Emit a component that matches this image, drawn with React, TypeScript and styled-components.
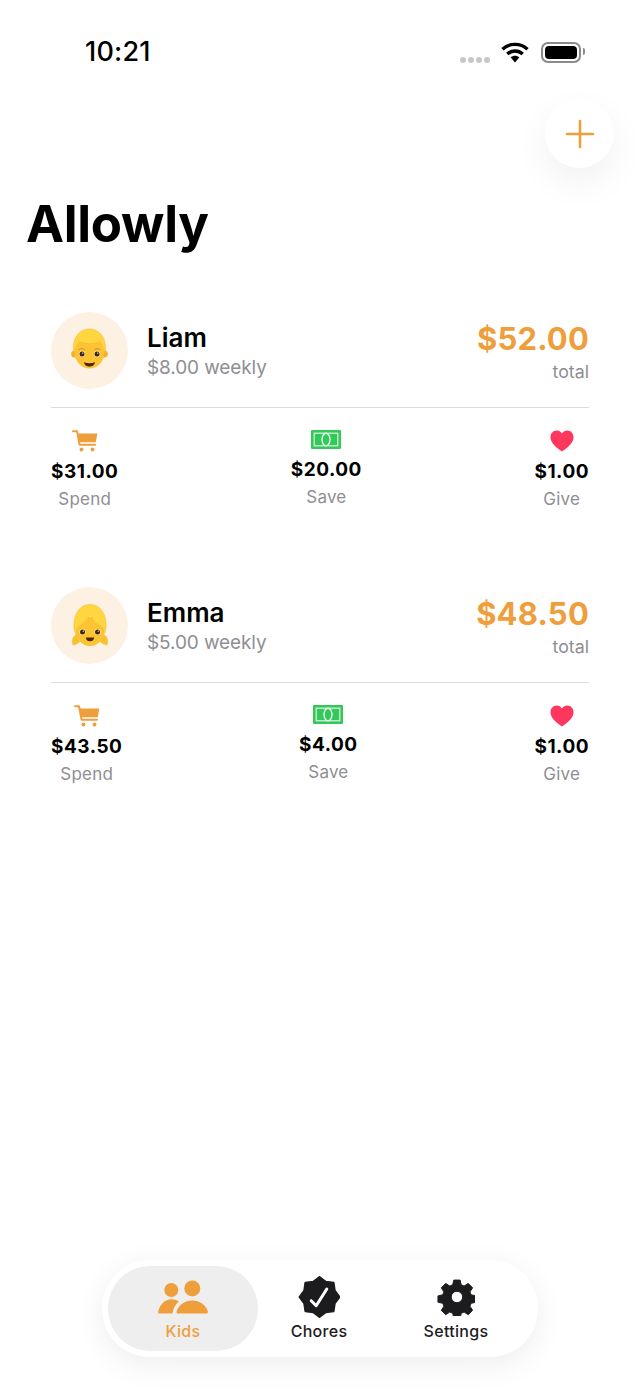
import React from "react";
import styled, { createGlobalStyle } from "styled-components";

const ORANGE = "#ef9e3c";

const GlobalStyle = createGlobalStyle`
  html, body {
    margin: 0;
    padding: 0;
    background: #fff;
    font-family: Inter, "Noto Sans", sans-serif;
    color: #000;
  }
  * { box-sizing: border-box; }
`;

// alternating outer/inner radius star, rounded off by the stroke join
const starPath = (cx: number, cy: number, outer: number, inner: number, lobes: number) => {
  const pts: string[] = [];
  for (let i = 0; i < lobes * 2; i++) {
    const a = (Math.PI * i) / lobes - Math.PI / 2;
    const r = i % 2 === 0 ? outer : inner;
    pts.push(`${(cx + r * Math.cos(a)).toFixed(2)} ${(cy + r * Math.sin(a)).toFixed(2)}`);
  }
  return `M${pts.join("L")}Z`;
};

const CartIcon = () => (
  <svg width="26" height="22" viewBox="0 0 26 22">
    <path d="M1 1.2h4l2.6 13.6H23" fill="none" stroke={ORANGE} strokeWidth="2" strokeLinecap="round" strokeLinejoin="round" />
    <path d="M6 3.5h19.4l-1.6 8.8H7.6z" fill={ORANGE} />
    <circle cx="9.5" cy="19.6" r="2" fill={ORANGE} />
    <circle cx="20.5" cy="19.6" r="2" fill={ORANGE} />
  </svg>
);

const BillIcon = () => (
  <svg width="30" height="19" viewBox="0 0 30 19">
    <rect x="0" y="0" width="30" height="19" rx="1" fill="#34c759" />
    <rect x="3.2" y="3.2" width="23.6" height="12.6" fill="#34c759" stroke="#d9f6e0" strokeWidth="1.2" />
    <ellipse cx="15" cy="9.5" rx="4" ry="6.3" fill="#34c759" stroke="#e9faee" strokeWidth="1.4" />
  </svg>
);

const HeartIcon = () => (
  <svg width="24" height="22" viewBox="0 0 24 22">
    <path d="M12 21.5C5 16.6.5 12.6.5 7.2.5 3.4 3.3.6 6.8.6c2.2 0 4 1.1 5.2 3 1.2-1.9 3-3 5.2-3 3.5 0 6.3 2.8 6.3 6.6 0 5.4-4.5 9.4-11.5 14.3z" fill="#ff375f" />
  </svg>
);

const PeopleIcon = () => (
  <svg width="50" height="34" viewBox="0 0 50 34">
    <circle cx="13.3" cy="10" r="7" fill={ORANGE} />
    <circle cx="34.3" cy="8.4" r="8" fill={ORANGE} />
    <path d="M1 33.5c-1 0-1-1-.7-2.2C1.8 24.5 7 19.2 13.5 19.2c2.8 0 5.3.8 7.3 2.3-3.3 2.8-5.5 6.8-6.3 12z" fill={ORANGE} />
    <path d="M20 33.5c-1.3 0-1.7-1-1.3-2.2C20.7 25 27 20.5 34.3 20.5S48 25 49.8 31.3c.3 1.2 0 2.2-1.3 2.2z" fill={ORANGE} />
  </svg>
);

const ChoresIcon = () => (
  <svg width="42" height="42" viewBox="0 0 42 42">
    <path d={starPath(21.5, 21, 20, 16.5, 8)} fill="#1c1c1e" stroke="#1c1c1e" strokeWidth="2" strokeLinejoin="round" />
    <path d="M13.2 24.7l5 5L28.8 13" fill="none" stroke="#fff" strokeWidth="3" strokeLinecap="round" strokeLinejoin="round" />
  </svg>
);

const GearIcon = () => (
  <svg width="38" height="38" viewBox="-0.6 0 24 24">
    <path
      fillRule="evenodd"
      fill="#1c1c1e"
      stroke="#1c1c1e"
      strokeWidth="0.6"
      strokeLinejoin="round"
      d="M10 1.3h4l.7 3 1.8.8 2.6-1.7 2.8 2.8-1.7 2.6.8 1.8 3 .7v4l-3 .7-.8 1.8 1.7 2.6-2.8 2.8-2.6-1.7-1.8.8-.7 3h-4l-.7-3-1.8-.8-2.6 1.7-2.8-2.8 1.7-2.6-.8-1.8-3-.7v-4l3-.7.8-1.8-1.7-2.6 2.8-2.8 2.6 1.7 1.8-.8zM12 8.4a3.6 3.6 0 1 0 0 7.2 3.6 3.6 0 0 0 0-7.2z"
    />
  </svg>
);

const WifiIcon = () => (
  <svg width="28" height="21" viewBox="0 0 28 21">
    <path d="M1.5 7.2C8.5.7 19.5.7 26.5 7.2" fill="none" stroke="#000" strokeWidth="3.4" />
    <path d="M6.3 12C10.6 8 17.4 8 21.7 12" fill="none" stroke="#000" strokeWidth="3.4" />
    <path d="M9.6 15.3c2.5-2.2 6.3-2.2 8.8 0L14 20.5z" fill="#000" />
  </svg>
);

const Eye = ({ cx, cy }: { cx: number; cy: number }) => (
  <>
    <circle cx={cx} cy={cy} r="3" fill="#fff0c4" />
    <circle cx={cx} cy={cy} r="2.5" fill="#3f2810" />
    <circle cx={cx + 0.8} cy={cy - 0.9} r="0.7" fill="#fff" />
  </>
);

const BoyFace = () => (
  <svg width="40" height="46" viewBox="0 0 40 46">
    <circle cx="4.8" cy="26" r="3.6" fill="#f4ae2a" />
    <circle cx="34.2" cy="26" r="3.6" fill="#f4ae2a" />
    <ellipse cx="19.5" cy="24.5" rx="14.8" ry="16" fill="#fcc433" />
    <path d="M3.8 25C1.5 10 9.5 1 19.5 1s18 9 15.7 24c-.8-5-2.7-9-5.2-11.2-5.5 2.4-15 2.4-20.5 0C7 16 4.6 20 3.8 25z" fill="#ffd63f" stroke="#f3b82a" strokeWidth="0.5" strokeLinejoin="round" />
    <path d="M9 21.5c1.8-1.2 4-1.2 5.5 0M24.500 21.5c1.5-1.2 3.7-1.2 5.5 0" fill="none" stroke="#c98a1a" strokeWidth="0.9" strokeLinecap="round" />
    <Eye cx={12} cy={26} />
    <Eye cx={27} cy={26} />
    <path d="M14 34.2c3.3 1.3 7.7 1.3 11 0-.8 3.4-3 4.3-5.5 4.3s-4.7-.9-5.5-4.3z" fill="#4a2410" />
  </svg>
);

const GirlFace = () => (
  <svg width="40" height="46" viewBox="0 0 40 46">
    <path d="M6 32C2.500 34 1.500 38 3 42c1.800-.2 4.500-1 7-3.500z" fill="#f8c22e" stroke="#f3b82a" strokeWidth="0.5" />
    <path d="M34 32c3.500 2 4.500 6 3 10-1.800-.2-4.500-1-7-3.500z" fill="#f8c22e" stroke="#f3b82a" strokeWidth="0.5" />
    <ellipse cx="20" cy="28.500" rx="14" ry="14.500" fill="#fcc433" />
    <path d="M20 12C17 18 12 22 6.500 25c-.5 3-.2 6 .5 8C3 28 3.500 20 5 14 7.500 6 13 1.500 20 1.500S32.500 6 35 14c1.500 6 2 14-2 19 .7-2 1-5 .5-8C28 22 23 18 20 12z" fill="#ffd63f" stroke="#f3b82a" strokeWidth="0.5" strokeLinejoin="round" />
    <Eye cx={12.500} cy={29} />
    <Eye cx={27.500} cy={29} />
    <path d="M15.800 34.500h8.400c-.4 2.800-2 3.800-4.200 3.800s-3.800-1-4.200-3.800z" fill="#4a2410" />
  </svg>
);

const Phone = styled.div`
  width: 640px;
  height: 1391px;
  background: #fff;
  display: flex;
  flex-direction: column;
  overflow: hidden;
`;

const StatusBar = styled.div`
  height: 70px;
  padding: 34px 59px 0 85px;
  display: flex;
  justify-content: space-between;
  align-items: center;
`;

const Time = styled.span`
  font-size: 27px;
  font-weight: 500;
  line-height: 36px;
  letter-spacing: 0.2px;
`;

const StatusIcons = styled.div`
  display: flex;
  align-items: center;
`;

const SignalDots = styled.div`
  display: flex;
  gap: 2px;
  margin: 16px 11px 0 0;
`;

const Dot = styled.i`
  width: 6px;
  height: 6px;
  border-radius: 50%;
  background: #c8c8c8;
`;

const Battery = styled.div`
  width: 40px;
  height: 21px;
  margin-left: 12px;
  border: 2px solid #8a8a8a;
  border-radius: 7px;
  padding: 2px;
  position: relative;
  &::before {
    content: "";
    display: block;
    height: 100%;
    background: #000;
    border-radius: 4px;
  }
  &::after {
    content: "";
    position: absolute;
    right: -6px;
    top: 4px;
    width: 2px;
    height: 7px;
    background: #8a8a8a;
    border-radius: 0 2px 2px 0;
  }
`;

const ActionRow = styled.div`
  display: flex;
  justify-content: flex-end;
  padding: 29px 26px 0 0;
`;

const AddButton = styled.button`
  width: 69px;
  height: 69px;
  border: 0;
  border-radius: 50%;
  background: #fff;
  padding: 0;
  display: flex;
  align-items: center;
  justify-content: center;
  box-shadow: 0 14px 36px rgba(0, 0, 0, 0.06);
`;

const Title = styled.h1`
  margin: 24px 0 0;
  padding-left: 26px;
  font-size: 51px;
  line-height: 63px;
  font-weight: 700;
  letter-spacing: -0.3px;
`;

const Cards = styled.div`
  display: flex;
  flex-direction: column;
  gap: 77px;
  margin-top: 57px;
  padding: 0 51px;
`;

const Card = styled.section``;

const CardHead = styled.div`
  display: flex;
  align-items: center;
  height: 77px;
`;

const Avatar = styled.div`
  width: 77px;
  height: 77px;
  border-radius: 50%;
  background: #fdf1e3;
  display: flex;
  align-items: center;
  justify-content: center;
  flex-shrink: 0;
`;

const NameBlock = styled.div`
  margin-left: 19px;
  padding-top: 1px;
  flex: 1;
`;

const Name = styled.div`
  font-size: 26px;
  font-weight: 600;
  line-height: 32px;
`;

const Weekly = styled.div`
  margin-top: 2px;
  font-size: 19px;
  line-height: 24px;
  letter-spacing: -0.1px;
  color: #8e8e93;
`;

const TotalBlock = styled.div`
  padding-top: 2px;
  text-align: right;
`;

const TotalValue = styled.div`
  font-size: 31px;
  font-weight: 700;
  line-height: 38px;
  letter-spacing: 0.2px;
  color: ${ORANGE};
`;

const TotalLabel = styled.div`
  margin-top: 3px;
  font-size: 17.8px;
  line-height: 22px;
  color: #8e8e93;
`;

const Divider = styled.div`
  height: 1px;
  margin-top: 18px;
  background: #dcdcdc;
`;

const Stats = styled.div`
  display: flex;
  justify-content: space-between;
  margin-top: 21px;
`;

const Stat = styled.div`
  display: flex;
  flex-direction: column;
  align-items: center;
`;

const StatIcon = styled.div<{ $height: number }>`
  height: ${(p) => p.$height}px;
  display: flex;
  align-items: flex-start;
  justify-content: center;
  padding-top: 1px;
`;

const StatValue = styled.div`
  margin-top: 7px;
  font-size: 19px;
  font-weight: 700;
  line-height: 24px;
  letter-spacing: 0.5px;
`;

const StatLabel = styled.div`
  margin-top: 4px;
  font-size: 17px;
  line-height: 22px;
  letter-spacing: 0.2px;
  color: #8e8e93;
`;

const TabBar = styled.nav`
  margin: auto 0 34px 102px;
  width: 436px;
  height: 97px;
  border-radius: 48px;
  background: #fff;
  padding: 6px;
  display: flex;
  box-shadow: 0 8px 32px rgba(0, 0, 0, 0.07);
`;

const Tab = styled.div<{ $width: number; $active?: boolean }>`
  width: ${(p) => p.$width}px;
  height: 85px;
  border-radius: 42px;
  display: flex;
  flex-direction: column;
  align-items: center;
  justify-content: flex-end;
  padding-bottom: 10px;
  background: ${(p) => (p.$active ? "#eeeeee" : "transparent")};
  color: ${(p) => (p.$active ? ORANGE : "#1c1c1e")};
`;

const TabIcon = styled.div`
  height: 42px;
  display: flex;
  align-items: center;
  justify-content: center;
`;

const TabLabel = styled.span`
  margin-top: 3px;
  font-size: 16px;
  font-weight: 500;
  line-height: 20px;
  letter-spacing: 0.3px;
`;

const kids = [
  {
    name: "Liam",
    weekly: "$8.00 weekly",
    total: "$52.00",
    face: <BoyFace />,
    spend: "$31.00",
    save: "$20.00",
    give: "$1.00",
  },
  {
    name: "Emma",
    weekly: "$5.00 weekly",
    total: "$48.50",
    face: <GirlFace />,
    spend: "$43.50",
    save: "$4.00",
    give: "$1.00",
  },
];

export default function App() {
  return (
    <Phone>
      <GlobalStyle />
      <StatusBar>
        <Time>10:21</Time>
        <StatusIcons>
          <SignalDots>
            <Dot />
            <Dot />
            <Dot />
            <Dot />
          </SignalDots>
          <WifiIcon />
          <Battery />
        </StatusIcons>
      </StatusBar>
      <ActionRow>
        <AddButton aria-label="Add">
          <svg width="30" height="30" viewBox="0 0 30 30">
            <path d="M15 2v26M2 15h26" stroke={ORANGE} strokeWidth="2.6" strokeLinecap="round" />
          </svg>
        </AddButton>
      </ActionRow>
      <Title>Allowly</Title>
      <Cards>
        {kids.map((kid) => (
          <Card key={kid.name}>
            <CardHead>
              <Avatar>{kid.face}</Avatar>
              <NameBlock>
                <Name>{kid.name}</Name>
                <Weekly>{kid.weekly}</Weekly>
              </NameBlock>
              <TotalBlock>
                <TotalValue>{kid.total}</TotalValue>
                <TotalLabel>total</TotalLabel>
              </TotalBlock>
            </CardHead>
            <Divider />
            <Stats>
              <Stat>
                <StatIcon $height={24}><CartIcon /></StatIcon>
                <StatValue>{kid.spend}</StatValue>
                <StatLabel>Spend</StatLabel>
              </Stat>
              <Stat>
                <StatIcon $height={22}><BillIcon /></StatIcon>
                <StatValue>{kid.save}</StatValue>
                <StatLabel>Save</StatLabel>
              </Stat>
              <Stat>
                <StatIcon $height={24}><HeartIcon /></StatIcon>
                <StatValue>{kid.give}</StatValue>
                <StatLabel>Give</StatLabel>
              </Stat>
            </Stats>
          </Card>
        ))}
      </Cards>
      <TabBar>
        <Tab $width={150} $active>
          <TabIcon><PeopleIcon /></TabIcon>
          <TabLabel>Kids</TabLabel>
        </Tab>
        <Tab $width={122}>
          <TabIcon><ChoresIcon /></TabIcon>
          <TabLabel>Chores</TabLabel>
        </Tab>
        <Tab $width={152}>
          <TabIcon><GearIcon /></TabIcon>
          <TabLabel>Settings</TabLabel>
        </Tab>
      </TabBar>
    </Phone>
  );
}
